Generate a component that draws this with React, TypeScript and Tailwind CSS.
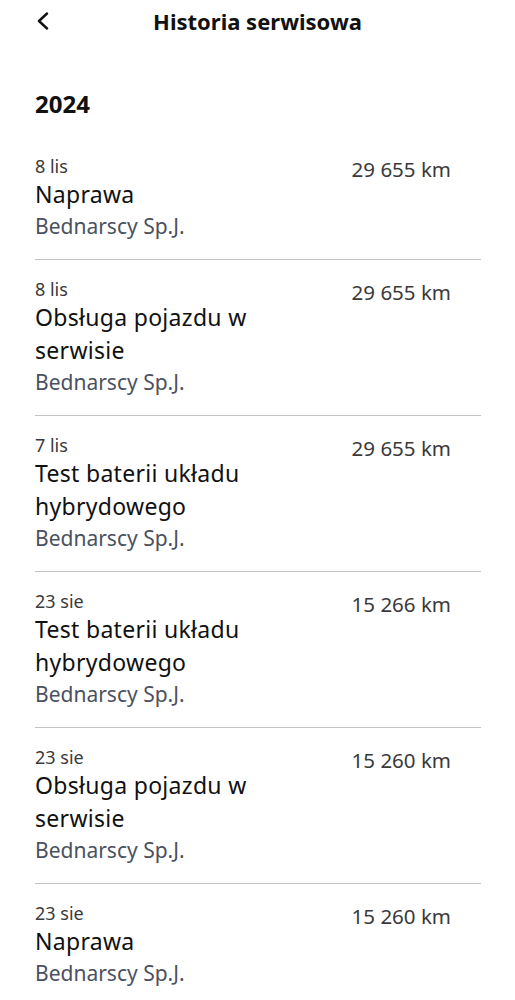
import React from 'react';

interface ServiceEntry {
  date: string;
  title: string;
  mileage: string;
  dealer: string;
}

const entries: ServiceEntry[] = [
  { date: '8 lis', title: 'Naprawa', mileage: '29 655 km', dealer: 'Bednarscy Sp.J.' },
  { date: '8 lis', title: 'Obsługa pojazdu w serwisie', mileage: '29 655 km', dealer: 'Bednarscy Sp.J.' },
  { date: '7 lis', title: 'Test baterii układu hybrydowego', mileage: '29 655 km', dealer: 'Bednarscy Sp.J.' },
  { date: '23 sie', title: 'Test baterii układu hybrydowego', mileage: '15 266 km', dealer: 'Bednarscy Sp.J.' },
  { date: '23 sie', title: 'Obsługa pojazdu w serwisie', mileage: '15 260 km', dealer: 'Bednarscy Sp.J.' },
  { date: '23 sie', title: 'Naprawa', mileage: '15 260 km', dealer: 'Bednarscy Sp.J.' },
];

function ServiceRow({ entry, last }: { entry: ServiceEntry; last: boolean }) {
  return (
    <div className={`flex justify-between pt-[17px] pb-[19px] ${last ? '' : 'border-b border-[#c4c4c4]'}`}>
      <div className="flex flex-col">
        <span className="text-[18px] leading-[24px] text-[#3a3a3a]">{entry.date}</span>
        <span className="max-w-[270px] text-[23px] leading-[33px] tracking-[0.3px] text-[#111111]">
          {entry.title}
        </span>
        <span className="mt-[1px] text-[21px] leading-[28px] text-[#4a5160]">{entry.dealer}</span>
      </div>
      <span className="mt-[3px] pr-[30px] text-[20.5px] leading-[24px] text-[#3a3a3a] whitespace-nowrap">
        {entry.mileage}
      </span>
    </div>
  );
}

export default function App() {
  return (
    <div className="min-h-screen bg-white font-['Noto_Sans',sans-serif]">
      {/* Top bar */}
      <header className="grid grid-cols-[1fr_auto_1fr] items-center px-[35px] pt-[5px]">
        <button className="flex h-[32px] items-center text-[#111111]" aria-label="Wstecz">
          <svg width="16" height="18" viewBox="0 0 16 18" fill="none">
            <path d="M12 1.5 4 9l8 7.5" stroke="currentColor" strokeWidth="2.4" strokeLinecap="round" strokeLinejoin="round" />
          </svg>
        </button>
        <h1 className="text-[22px] font-bold leading-[32px] text-[#111111]">Historia serwisowa</h1>
        <div />
      </header>

      {/* Year group */}
      <section className="mt-[51px] pl-[35px] pr-[34px]">
        <h2 className="mb-[17px] text-[24px] font-bold leading-[32px] text-[#111111]">2024</h2>
        <div className="flex flex-col">
          {entries.map((entry, i) => (
            <ServiceRow key={i} entry={entry} last={i === entries.length - 1} />
          ))}
        </div>
      </section>
    </div>
  );
}
